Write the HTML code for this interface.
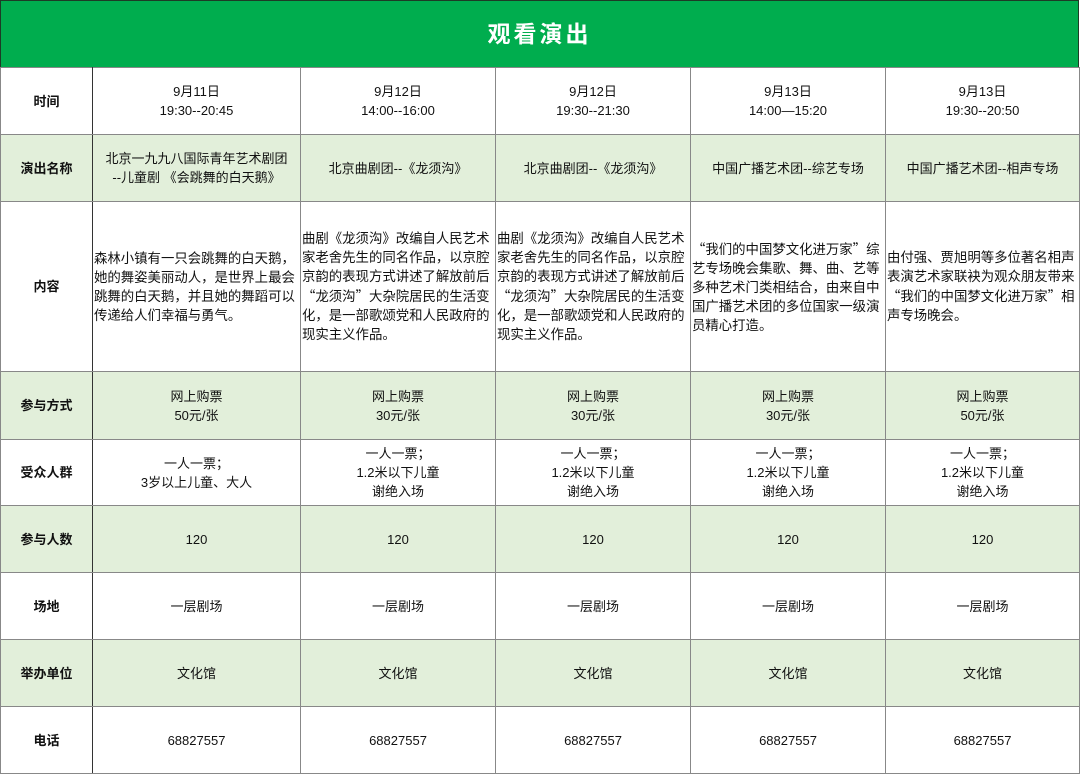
<!DOCTYPE html>
<html><head><meta charset="utf-8"><style>
body{margin:0;width:1080px;height:776px;background:#fff;font-family:"Liberation Sans","Noto Sans CJK SC",sans-serif;color:#111;overflow:hidden}
.hd{position:absolute;left:0;top:0;width:1077px;height:66px;background:#00ad4e;border:1px solid #1d3b26;color:#fff;font-size:23px;font-weight:bold;text-align:center;line-height:66px;letter-spacing:3px}
table{position:absolute;left:0;top:67px;border-collapse:collapse;table-layout:fixed;width:1079px}
td{border:1px solid #888;text-align:center;vertical-align:middle;font-size:13px;line-height:19px;padding:0 1px;overflow:hidden}
td.l{font-weight:bold;border-right:1px solid #333;font-size:13px}
tr.g td{background:#e2efda}
td.t{text-align:left;padding:0 1px;white-space:nowrap;font-size:13.4px}
table{border:1px solid #333}
q{quotes:none;font-family:"Noto Sans CJK SC",sans-serif}
</style></head><body>
<div class="hd">观看演出</div>
<table>
<col style="width:92px"><col style="width:208px"><col style="width:195px"><col style="width:195px"><col style="width:195px"><col style="width:194px">
<tr style="height:67px"><td class="l">时间</td><td>9月11日<br>19:30--20:45</td><td>9月12日<br>14:00--16:00</td><td>9月12日<br>19:30--21:30</td><td>9月13日<br>14:00—15:20</td><td>9月13日<br>19:30--20:50</td></tr>
<tr class="g" style="height:67px"><td class="l">演出名称</td><td>北京一九九八国际青年艺术剧团<br>--儿童剧 《会跳舞的白天鹅》</td><td>北京曲剧团--《龙须沟》</td><td>北京曲剧团--《龙须沟》</td><td>中国广播艺术团--综艺专场</td><td>中国广播艺术团--相声专场</td></tr>
<tr style="height:170px"><td class="l">内容</td><td class="t">森林小镇有一只会跳舞的白天鹅，<br>她的舞姿美丽动人，是世界上最会<br>跳舞的白天鹅，并且她的舞蹈可以<br>传递给人们幸福与勇气。</td><td class="t">曲剧《龙须沟》改编自人民艺术<br>家老舍先生的同名作品，以京腔<br>京韵的表现方式讲述了解放前后<br><q>“</q>龙须沟<q>”</q>大杂院居民的生活变<br>化，是一部歌颂党和人民政府的<br>现实主义作品。</td><td class="t">曲剧《龙须沟》改编自人民艺术<br>家老舍先生的同名作品，以京腔<br>京韵的表现方式讲述了解放前后<br><q>“</q>龙须沟<q>”</q>大杂院居民的生活变<br>化，是一部歌颂党和人民政府的<br>现实主义作品。</td><td class="t"><q>“</q>我们的中国梦文化进万家<q>”</q>综<br>艺专场晚会集歌、舞、曲、艺等<br>多种艺术门类相结合，由来自中<br>国广播艺术团的多位国家一级演<br>员精心打造。</td><td class="t">由付强、贾旭明等多位著名相声<br>表演艺术家联袂为观众朋友带来<br><q>“</q>我们的中国梦文化进万家<q>”</q>相<br>声专场晚会。</td></tr>
<tr class="g" style="height:68px"><td class="l">参与方式</td><td>网上购票<br>50元/张</td><td>网上购票<br>30元/张</td><td>网上购票<br>30元/张</td><td>网上购票<br>30元/张</td><td>网上购票<br>50元/张</td></tr>
<tr style="height:66px"><td class="l">受众人群</td><td>一人一票；<br>3岁以上儿童、大人</td><td>一人一票；<br>1.2米以下儿童<br>谢绝入场</td><td>一人一票；<br>1.2米以下儿童<br>谢绝入场</td><td>一人一票；<br>1.2米以下儿童<br>谢绝入场</td><td>一人一票；<br>1.2米以下儿童<br>谢绝入场</td></tr>
<tr class="g" style="height:67px"><td class="l">参与人数</td><td>120</td><td>120</td><td>120</td><td>120</td><td>120</td></tr>
<tr style="height:67px"><td class="l">场地</td><td>一层剧场</td><td>一层剧场</td><td>一层剧场</td><td>一层剧场</td><td>一层剧场</td></tr>
<tr class="g" style="height:67px"><td class="l">举办单位</td><td>文化馆</td><td>文化馆</td><td>文化馆</td><td>文化馆</td><td>文化馆</td></tr>
<tr style="height:67px"><td class="l">电话</td><td>68827557</td><td>68827557</td><td>68827557</td><td>68827557</td><td>68827557</td></tr>
</table>
</body></html>
